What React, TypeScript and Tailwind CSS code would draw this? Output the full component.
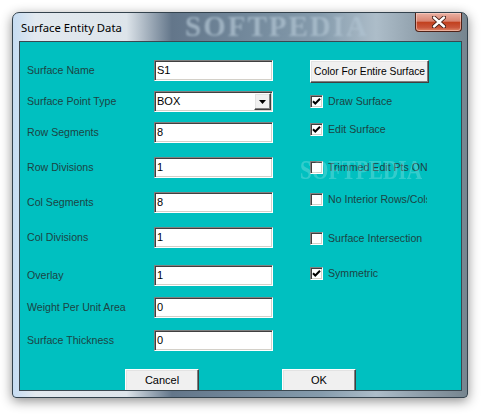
import React from 'react';

const font = { fontFamily: '"Liberation Sans", Arial, sans-serif' };

const sunken =
  'border border-t-[#808080] border-l-[#808080] border-b-white border-r-white shadow-[inset_1px_1px_0_#404040,inset_-1px_-1px_0_#d4d0c8]';
const raised =
  'border border-t-white border-l-white border-b-[#404040] border-r-[#404040] shadow-[inset_-1px_-1px_0_#808080,inset_1px_1px_0_#e3e3e3]';

interface FieldProps {
  label: string;
  value: string;
  top: string;
  select?: boolean;
}

const Field: React.FC<FieldProps> = ({ label, value, top, select }) => (
  <div className={`flex items-center h-[21px] ${top}`}>
    <span className="w-[127px] text-[10.6px] text-[#1c4444] whitespace-nowrap">{label}</span>
    <div className={`w-[119px] h-[21px] bg-white flex items-center ${sunken}`}>
      <span className="pl-[2px] text-[11px] text-black flex-1 leading-none">{value}</span>
      {select && (
        <div className={`w-[17px] h-[17px] mr-[1px] bg-[#f0f0f0] flex items-center justify-center ${raised}`}>
          <svg width="7" height="4" viewBox="0 0 7 4">
            <path d="M0 0H7L3.5 4Z" fill="#000" />
          </svg>
        </div>
      )}
    </div>
  </div>
);

interface CheckProps {
  label: string;
  checked?: boolean;
  top: string;
}

const Check: React.FC<CheckProps> = ({ label, checked, top }) => (
  <div className={`flex items-center h-[13px] w-[117px] overflow-hidden whitespace-nowrap ${top}`}>
    <div className={`w-[13px] h-[13px] shrink-0 bg-white flex items-center justify-center ${sunken}`}>
      {checked && (
        <svg width="9" height="9" viewBox="0 0 9 9">
          <path d="M1 4.2L3.3 6.5L8 1.8" stroke="#000" strokeWidth="2" fill="none" />
        </svg>
      )}
    </div>
    <span className="ml-[5px] text-[10.6px] text-[#1c4444]">{label}</span>
  </div>
);

export default function App() {
  return (
    <div className="w-[489px] h-[419px] bg-white overflow-hidden" style={font}>
      <div className="relative ml-[12px] mt-[12px] w-[456px] h-[386px] flex flex-col rounded-t-[7px] rounded-b-[4px] border border-[#33424d] bg-[linear-gradient(90deg,#c6dcf2_0%,#e2e9ef_5%,#dde4ea_25%,#63768a_35%,#71879a_50%,#869cad_68%,#adbdc9_80%,#8e9eaa_90%,#76858f_100%)] shadow-[0_3px_12px_rgba(0,0,0,0.45)]">
        {/* title bar */}
        <div className="relative h-[28px] flex items-start shrink-0">
          <span className="pl-[8px] mt-[7px] text-[11.3px] text-black" style={{ fontFamily: '"Noto Sans", "Liberation Sans", sans-serif' }}>
            Surface Entity Data
          </span>
          <span
            className="absolute left-[172px] top-[-1px] leading-none text-[29px] font-bold tracking-[2px] text-[#afc2d0] opacity-75 blur-[1px] pointer-events-none"
            style={{ fontFamily: '"Liberation Serif", serif' }}
          >
            SOFTPEDIA
          </span>
          <div className="ml-auto mr-[5px] w-[47px] h-[19px] rounded-b-[4px] border border-t-0 border-[#4f2218] bg-[linear-gradient(180deg,#eab1a3_0%,#d98572_45%,#c2411f_52%,#c9553a_80%,#e08a6a_100%)] shadow-[inset_0_0_0_1px_rgba(255,220,210,0.5)] flex items-center justify-center relative z-10">
            <svg width="14" height="12" viewBox="0 0 14 12">
              <path d="M2 1.5L12 10.5M12 1.5L2 10.5" stroke="#3d1a12" strokeWidth="4.2" strokeLinecap="round" />
              <path d="M2 1.5L12 10.5M12 1.5L2 10.5" stroke="#fff" strokeWidth="2.4" strokeLinecap="round" />
            </svg>
          </div>
        </div>

        {/* client area */}
        <div className="relative flex-1 ml-[6px] mr-[5px] mb-[6px] border border-[#3b4750] bg-[#00c0c0] overflow-hidden flex flex-col">
          <div className="flex pl-[7px] pt-[18px]">
            <div className="flex flex-col">
              <Field label="Surface Name" value="S1" top="" />
              <Field label="Surface Point Type" value="BOX" top="mt-[10px]" select />
              <Field label="Row Segments" value="8" top="mt-[10px]" />
              <Field label="Row Divisions" value="1" top="mt-[14px]" />
              <Field label="Col Segments" value="8" top="mt-[14px]" />
              <Field label="Col Divisions" value="1" top="mt-[14px]" />
              <Field label="Overlay" value="1" top="mt-[17px]" />
              <Field label="Weight Per Unit Area" value="0" top="mt-[11px]" />
              <Field label="Surface Thickness" value="0" top="mt-[12px]" />
            </div>
            <div className="flex flex-col ml-[37px]">
              <div className={`w-[119px] h-[23px] bg-[#f0f0f0] flex items-center justify-center ${raised}`}>
                <span className="text-[10.3px] text-black whitespace-nowrap">Color For Entire Surface</span>
              </div>
              <Check label="Draw Surface" checked top="mt-[12px]" />
              <Check label="Edit Surface" checked top="mt-[15px]" />
              <Check label="Trimmed Edit Pts ON" top="mt-[25px]" />
              <Check label="No Interior Rows/Cols" top="mt-[19px]" />
              <Check label="Surface Intersection" top="mt-[26px]" />
              <Check label="Symmetric" checked top="mt-[22px]" />
            </div>
          </div>

          <div className="flex pl-[105px] mt-[18px]">
            <div className={`w-[74px] h-[23px] bg-[#f0f0f0] flex items-center justify-center ${raised}`}>
              <span className="text-[11px] text-black">Cancel</span>
            </div>
            <div className={`ml-[83px] w-[74px] h-[23px] bg-[#f0f0f0] flex items-center justify-center ${raised}`}>
              <span className="text-[11px] text-black">OK</span>
            </div>
          </div>

          <span
            className="absolute left-[280px] top-[115px] leading-none origin-left scale-x-[0.79] text-[27px] font-bold text-white opacity-20 pointer-events-none"
            style={{ fontFamily: '"Liberation Serif", serif' }}
          >
            SOFTPEDIA
          </span>
        </div>
      </div>
    </div>
  );
}
